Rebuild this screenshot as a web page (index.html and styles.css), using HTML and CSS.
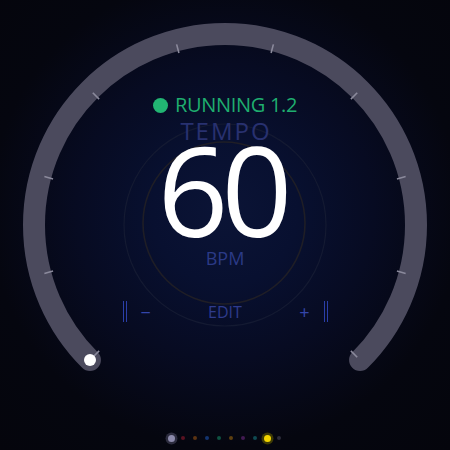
FILE: index.html
```html
<!DOCTYPE html>
<html lang="en">
<head>
<meta charset="utf-8">
<title>Tempo</title>
<link rel="stylesheet" href="styles.css">
</head>
<body>
<div class="screen">
  <svg class="dial" viewBox="0 0 450 450" width="450" height="450">
    <circle cx="225" cy="225" r="101" class="ring-outer"/>
    <circle cx="224" cy="223" r="81" class="ring-inner"/>
    <path class="track" d="M 89.94 360.06 A 191 191 0 1 1 360.06 360.06"/>
    <g class="ticks">
      <line x1="99.14" y1="350.86" x2="92.77" y2="357.23"/>
      <line x1="53.07" y1="271.07" x2="44.37" y2="273.40"/>
      <line x1="53.07" y1="178.93" x2="44.37" y2="176.60"/>
      <line x1="99.14" y1="99.14" x2="92.77" y2="92.77"/>
      <line x1="178.93" y1="53.07" x2="176.60" y2="44.37"/>
      <line x1="271.07" y1="53.07" x2="273.40" y2="44.37"/>
      <line x1="350.86" y1="99.14" x2="357.23" y2="92.77"/>
      <line x1="396.93" y1="178.93" x2="405.63" y2="176.60"/>
      <line x1="396.93" y1="271.07" x2="405.63" y2="273.40"/>
      <line x1="350.86" y1="350.86" x2="357.23" y2="357.23"/>
    </g>
    <circle cx="90" cy="360" r="6" class="knob"/>
  </svg>
  <main class="face">
    <div class="status"><span class="led"></span>RUNNING 1.2</div>
    <div class="label">TEMPO</div>
    <div class="value">60</div>
    <div class="unit">BPM</div>
    <div class="controls">
      <span class="bars"></span>
      <span class="sign">−</span>
      <span class="edit">EDIT</span>
      <span class="sign">+</span>
      <span class="bars"></span>
    </div>
    <nav class="pager">
      <span class="slot"><span class="dot big gray"></span></span>
      <span class="slot"><span class="dot c1"></span></span>
      <span class="slot"><span class="dot c2"></span></span>
      <span class="slot"><span class="dot c3"></span></span>
      <span class="slot"><span class="dot c4"></span></span>
      <span class="slot"><span class="dot c5"></span></span>
      <span class="slot"><span class="dot c6"></span></span>
      <span class="slot"><span class="dot c7"></span></span>
      <span class="slot"><span class="dot big yellow"></span></span>
      <span class="slot"><span class="dot c8"></span></span>
    </nav>
  </main>
</div>
</body>
</html>
```
FILE: styles.css
```css
html, body {
  margin: 0;
  padding: 0;
  background: #05050d;
}

.screen {
  position: relative;
  width: 450px;
  height: 450px;
  overflow: hidden;
  background: radial-gradient(circle at 50% 47%, #0b1436 0%, #081030 22%, #070b22 45%, #05060f 72%, #05050c 100%);
  font-family: "Open Sans", "Noto Sans", sans-serif;
}

.dial {
  position: absolute;
  left: 0;
  top: 0;
}

.ring-outer {
  fill: none;
  stroke: #141a32;
  stroke-width: 1.2;
}

.ring-inner {
  fill: none;
  stroke: #1f1e26;
  stroke-width: 1.6;
}

.track {
  fill: none;
  stroke: #4b4a5d;
  stroke-width: 22;
  stroke-linecap: round;
}

.ticks line {
  stroke: #8b8a9c;
  stroke-width: 1.6;
}

.knob {
  fill: #ffffff;
}

.face {
  position: relative;
  display: flex;
  flex-direction: column;
  align-items: center;
  padding-top: 95px;
}

.status {
  display: flex;
  align-items: center;
  font-size: 20px;
  line-height: 20px;
  color: #1fae6f;
  letter-spacing: -0.3px;
}

.led {
  width: 15px;
  height: 15px;
  border-radius: 50%;
  background: #22b573;
  margin-right: 7px;
}

.label {
  margin-top: 4px;
  font-size: 24px;
  line-height: 24px;
  letter-spacing: 2px;
  padding-left: 2px;
  color: #283170;
}

.value {
  margin-top: 0;
  font-size: 124px;
  line-height: 92px;
  height: 92px;
  font-weight: 400;
  color: #ffffff;
  letter-spacing: -7px;
  padding-right: 7px;
}

.unit {
  margin-top: 14px;
  font-size: 18px;
  line-height: 18px;
  color: #2b3a86;
}

.controls {
  margin-top: 34px;
  width: 205px;
  display: grid;
  grid-template-columns: auto auto 1fr auto auto;
  column-gap: 14px;
  align-items: center;
  font-size: 16px;
  line-height: 16px;
  color: #3344a6;
}

.bars {
  width: 2px;
  height: 21px;
  border-left: 1.6px solid #2b3ea8;
  border-right: 1.6px solid #2b3ea8;
}

.sign {
  font-size: 18px;
  line-height: 16px;
  color: #3446aa;
}

.edit {
  text-align: center;
  color: #2e3b8c;
}

.pager {
  margin-top: 110px;
  display: flex;
}

.slot {
  width: 12px;
  height: 12px;
  display: flex;
  align-items: center;
  justify-content: center;
}

.dot {
  width: 4px;
  height: 4px;
  border-radius: 50%;
}

.dot.big {
  width: 7px;
  height: 7px;
}

.gray {
  background: #8c8aab;
  box-shadow: 0 0 0 2.5px #2c2c3e;
}

.yellow {
  background: #f2d400;
  box-shadow: 0 0 0 2.5px #3d3a06;
}

.c1 { background: #5a1222; }
.c2 { background: #5c3312; }
.c3 { background: #133470; }
.c4 { background: #0f5242; }
.c5 { background: #5e4010; }
.c6 { background: #421a52; }
.c7 { background: #0f4a52; }
.c8 { background: #2c2c3a; }
```
